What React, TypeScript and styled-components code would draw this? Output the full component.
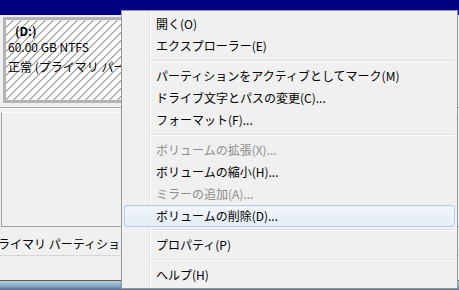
import React from "react";
import styled, { createGlobalStyle } from "styled-components";

const GlobalStyle = createGlobalStyle`
    html, body {
        margin: 0;
        padding: 0;
        background: #f0f0f0;
    }
    body {
        font-family: "Noto Sans CJK JP", "Noto Sans", sans-serif;
        font-size: 12px;
        color: #000;
    }
`;

type MenuEntry =
    | { kind: "item"; label: string; disabled?: boolean; hover?: boolean }
    | { kind: "sep" };

const menuEntries: MenuEntry[] = [
    { kind: "item", label: "開く(O)" },
    { kind: "item", label: "エクスプローラー(E)" },
    { kind: "sep" },
    { kind: "item", label: "パーティションをアクティブとしてマーク(M)" },
    { kind: "item", label: "ドライブ文字とパスの変更(C)..." },
    { kind: "item", label: "フォーマット(F)..." },
    { kind: "sep" },
    { kind: "item", label: "ボリュームの拡張(X)...", disabled: true },
    { kind: "item", label: "ボリュームの縮小(H)..." },
    { kind: "item", label: "ミラーの追加(A)...", disabled: true },
    { kind: "item", label: "ボリュームの削除(D)...", hover: true },
    { kind: "sep" },
    { kind: "item", label: "プロパティ(P)" },
    { kind: "sep" },
    { kind: "item", label: "ヘルプ(H)" },
];

function App() {
    return (
        <>
            <GlobalStyle />
            <Page>
                <TitleBar />
                <VolumeRow>
                    <VolumeBox>
                        <DriveLabel>(D:)</DriveLabel>
                        <VolumeLine>60.00 GB NTFS</VolumeLine>
                        <VolumeLine>正常 (プライマリ パーティション)</VolumeLine>
                    </VolumeBox>
                </VolumeRow>
                <Rule />
                <EmptyPanel />
                <StatusRow>プライマリ パーティション</StatusRow>
                <Footer />
                <Taskbar />

                <ContextMenu>
                    {menuEntries.map((entry, idx) =>
                        entry.kind === "sep" ? (
                            <Separator key={idx} />
                        ) : (
                            <MenuItem key={idx} $disabled={entry.disabled} $hover={entry.hover}>
                                {entry.label}
                            </MenuItem>
                        )
                    )}
                </ContextMenu>
            </Page>
        </>
    );
}

export default App;

const Page = styled.div`
    position: relative;
    width: 459px;
    height: 290px;
    overflow: hidden;
    display: flex;
    flex-direction: column;
    background: #f0f0f0;
`;

const TitleBar = styled.div`
    height: 15px;
    background: #000080;
    flex-shrink: 0;
`;

const VolumeRow = styled.div`
    display: flex;
    padding: 2px 0 0 3px;
    flex-shrink: 0;
`;

const VolumeBox = styled.div`
    box-sizing: border-box;
    width: 150px;
    height: 86px;
    border: 3px solid #b4b4b4;
    padding: 3px 0 0 2px;
    overflow: hidden;
    white-space: nowrap;
    background: repeating-linear-gradient(
            135deg,
            #ffffff 0px,
            #ffffff 4.7px,
            #b0b0b0 4.7px,
            #b0b0b0 5.66px
        ),
        #fff;
    display: flex;
    flex-direction: column;
`;

const DriveLabel = styled.div`
    font-weight: bold;
    padding-left: 7px;
    line-height: 16px;
    margin-bottom: -2px;
`;

const VolumeLine = styled.div`
    line-height: 20px;
`;

const Rule = styled.div`
    margin-top: 4px;
    height: 1px;
    border-top: 1px solid #a0a0a0;
    background: #fff;
    flex-shrink: 0;
`;

const EmptyPanel = styled.div`
    box-sizing: border-box;
    margin: 3px 0 0 1px;
    height: 115px;
    border-left: 1px solid #a0a0a0;
    border-bottom: 1px solid #a0a0a0;
    border-top: 1px solid #fafafa;
    flex-shrink: 0;
`;

const StatusRow = styled.div`
    height: 28px;
    line-height: 33px;
    margin-left: -14px;
    white-space: nowrap;
    border-bottom: 1px solid #d6d6d6;
    flex-shrink: 0;
`;

const Footer = styled.div`
    flex: 1;
    background: #f1efef;
`;

const Taskbar = styled.div`
    height: 9px;
    border-top: 1px solid #5a5a5a;
    background: linear-gradient(to bottom, #b9cde0 0%, #8eabc8 50%, #4d6f93 100%);
    flex-shrink: 0;
`;

const ContextMenu = styled.div`
    position: absolute;
    left: 121px;
    top: 10px;
    width: 337px;
    height: 279px;
    box-sizing: border-box;
    border: 1px solid #979797;
    padding: 2px;
    background: linear-gradient(
            to right,
            transparent 27px,
            #e2e3e3 27px,
            #e2e3e3 28px,
            #ffffff 28px,
            #ffffff 29px,
            transparent 29px
        ),
        #f0f0f0;
    display: flex;
    flex-direction: column;
`;

const MenuItem = styled.div<{ $disabled?: boolean; $hover?: boolean }>`
    box-sizing: border-box;
    height: 22px;
    line-height: 20px;
    padding-left: 31px;
    white-space: nowrap;
    border: 1px solid ${(p) => (p.$hover ? "#b4cbe9" : "transparent")};
    border-radius: 3px;
    color: ${(p) => (p.$disabled ? "#8d8d8d" : "#000")};
    background: ${(p) =>
        p.$hover ? "linear-gradient(to bottom, #f1f5fb 0%, #e5edf8 100%)" : "transparent"};
`;

const Separator = styled.div`
    height: 8px;
    margin-left: 27px;
    display: flex;
    flex-direction: column;
    justify-content: center;

    &::before {
        content: "";
        display: block;
        height: 1px;
        background: #e0e0e0;
    }
    &::after {
        content: "";
        display: block;
        height: 1px;
        background: #ffffff;
    }
`;
